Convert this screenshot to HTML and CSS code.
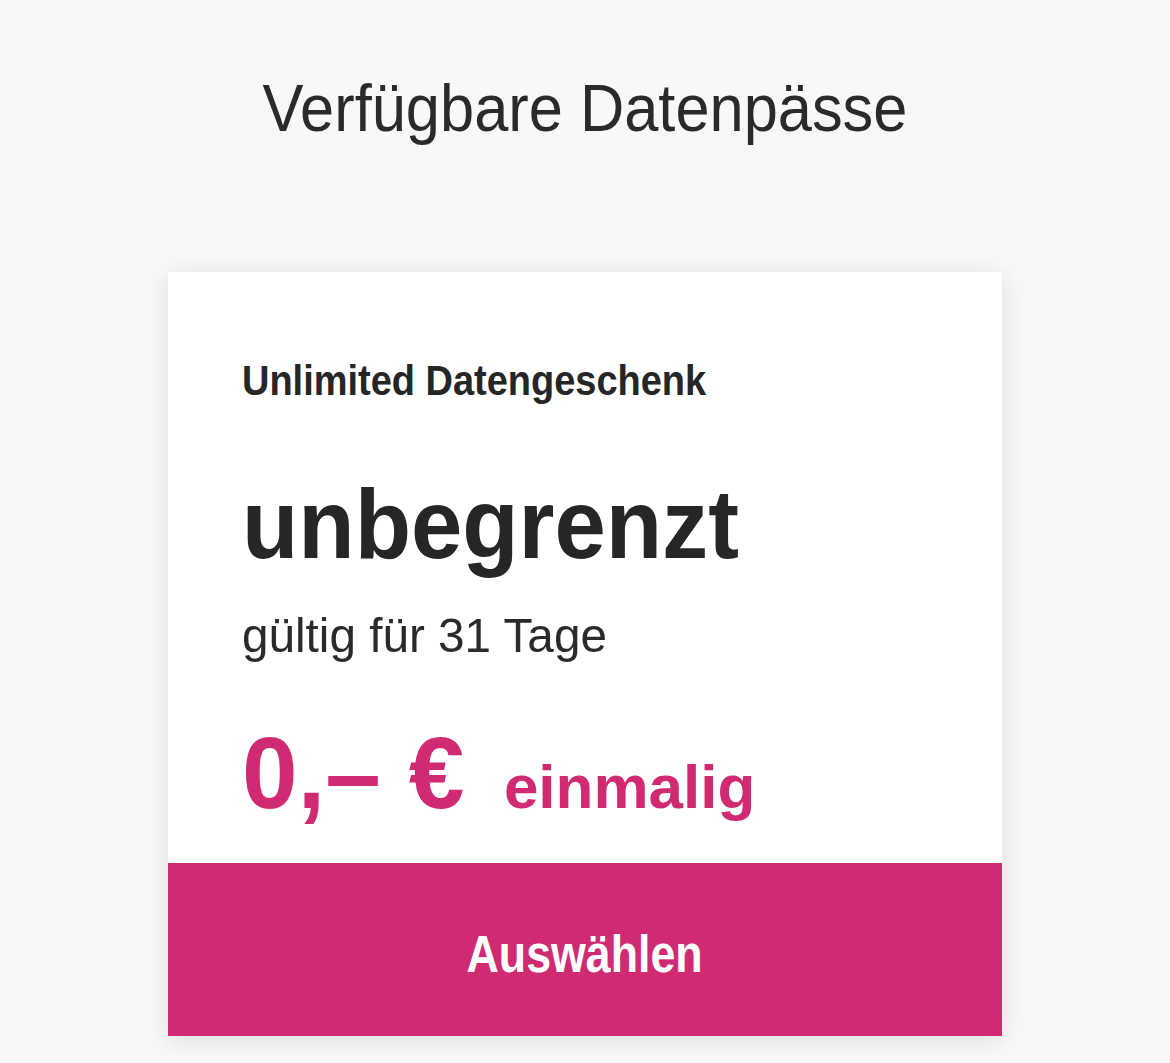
FILE: index.html
```html
<!DOCTYPE html>
<html lang="de">
<head>
<meta charset="utf-8">
<link rel="stylesheet" href="styles.css">
</head>
<body>
<main class="page">
  <h1 class="title"><span class="cond cond-title">Verfügbare Datenpässe</span></h1>
  <section class="card">
    <div class="card-body">
      <div class="pass-name"><span class="cond cond-name">Unlimited Datengeschenk</span></div>
      <div class="volume"><span class="cond cond-volume">unbegrenzt</span></div>
      <div class="validity"><span class="cond cond-validity">gültig für 31 Tage</span></div>
      <div class="price"><span class="amount"><span class="cond cond-amount">0,– €</span></span><span class="period">einmalig</span></div>
    </div>
    <button class="select"><span class="cond cond-button">Auswählen</span></button>
  </section>
</main>
</body>
</html>
```
FILE: styles.css
```css
html, body {
  margin: 0;
  padding: 0;
  background: #f8f8f8;
}
body {
  font-family: "Liberation Sans", Arial, sans-serif;
  color: #262626;
  height: 1063px;
  overflow: hidden;
}
.page {
  display: flex;
  flex-direction: column;
  align-items: center;
}
.cond {
  display: inline-block;
  white-space: nowrap;
  transform-origin: left center;
}
.title {
  margin: 68px 0 0 0;
  font-weight: 400;
  font-size: 67px;
  line-height: 80px;
  color: #2a2a2a;
}
.cond-title {
  transform: scaleX(0.916);
  transform-origin: center center;
}
.card {
  margin-top: 124px;
  width: 834px;
  background: #fff;
  box-shadow: 0 4px 24px rgba(0,0,0,0.11);
  display: flex;
  flex-direction: column;
}
.card-body {
  padding: 84px 74px 35px 74px;
}
.pass-name {
  font-weight: 700;
  font-size: 42px;
  line-height: 50px;
}
.cond-name { transform: scaleX(0.904); }
.volume {
  margin-top: 68px;
  font-weight: 700;
  font-size: 98px;
  line-height: 100px;
}
.cond-volume { transform: scaleX(0.941); }
.validity {
  margin-top: 31px;
  font-size: 49px;
  line-height: 60px;
  color: #2a2a2a;
}
.cond-validity { transform: scaleX(0.973); }
.price {
  margin-top: 53px;
  color: #d02b72;
  font-weight: 700;
  display: flex;
  align-items: baseline;
  gap: 35px;
}
.amount {
  font-size: 102px;
  line-height: 110px;
}
.cond-amount { transform: scaleX(0.98); }
.period {
  font-size: 62px;
}
.select {
  border: 0;
  margin: 0;
  padding: 10px 0 0 0;
  height: 173px;
  background: #d02b72;
  color: #fff;
  font-family: inherit;
  font-weight: 700;
  font-size: 51px;
  line-height: 60px;
  cursor: pointer;
}
.cond-button {
  transform: scaleX(0.877);
  transform-origin: center center;
}
```
